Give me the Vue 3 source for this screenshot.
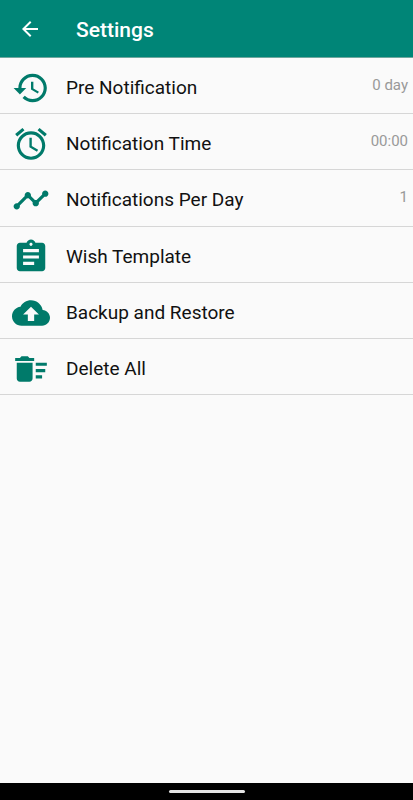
<script setup>
const items = [
  {
    label: 'Pre Notification',
    value: '0 day',
    icon: 'M13 3c-4.97 0-9 4.03-9 9H1l3.89 3.89.07.14L9 12H6c0-3.87 3.13-7 7-7s7 3.13 7 7-3.13 7-7 7c-1.93 0-3.68-.79-4.94-2.06l-1.42 1.42C8.27 19.99 10.51 21 13 21c4.97 0 9-4.03 9-9s-4.03-9-9-9zm-1 5v5l4.28 2.54.72-1.21-3.5-2.08V8H12z'
  },
  {
    label: 'Notification Time',
    value: '00:00',
    icon: 'M22 5.72l-4.6-3.86-1.29 1.53 4.6 3.86L22 5.72zM7.88 3.39L6.6 1.86 2 5.71l1.29 1.53 4.59-3.85zM12.5 8H11v6l4.75 2.85.75-1.23-4-2.37V8zM12 4c-4.97 0-9 4.03-9 9s4.02 9 9 9c4.97 0 9-4.03 9-9s-4.03-9-9-9zm0 16c-3.87 0-7-3.13-7-7s3.13-7 7-7 7 3.13 7 7-3.13 7-7 7z'
  },
  {
    label: 'Notifications Per Day',
    value: '1',
    icon: 'M23 8c0 1.1-.9 2-2 2-.18 0-.35-.02-.51-.07l-3.56 3.55c.05.16.07.34.07.52 0 1.1-.9 2-2 2s-2-.9-2-2c0-.18.02-.36.07-.52l-2.55-2.55c-.16.05-.34.07-.52.07s-.36-.02-.52-.07l-4.55 4.56c.05.16.07.33.07.51 0 1.1-.9 2-2 2s-2-.9-2-2 .9-2 2-2c.18 0 .35.02.51.07l4.56-4.55C8.02 9.36 8 9.18 8 9c0-1.1.9-2 2-2s2 .9 2 2c0 .18-.02.36-.07.52l2.55 2.55c.16-.05.34-.07.52-.07s.36.02.52.07l3.55-3.56C19.02 8.35 19 8.18 19 8c0-1.1.9-2 2-2s2 .9 2 2z'
  },
  {
    label: 'Wish Template',
    icon: 'M19 3h-4.18C14.4 1.84 13.3 1 12 1c-1.3 0-2.4.84-2.82 2H5c-1.1 0-2 .9-2 2v14c0 1.1.9 2 2 2h14c1.1 0 2-.9 2-2V5c0-1.1-.9-2-2-2zm-7 0c.55 0 1 .45 1 1s-.45 1-1 1-1-.45-1-1 .45-1 1-1zm2 14H7v-2h7v2zm3-4H7v-2h10v2zm0-4H7V7h10v2z'
  },
  {
    label: 'Backup and Restore',
    icon: 'M19.35 10.04C18.67 6.59 15.64 4 12 4 9.11 4 6.6 5.64 5.35 8.04 2.34 8.36 0 10.91 0 14c0 3.31 2.69 6 6 6h13c2.76 0 5-2.24 5-5 0-2.64-2.05-4.78-4.65-4.96zM14 13v4h-4v-4H7l5-5 5 5h-3z'
  },
  {
    label: 'Delete All',
    icon: 'M15 16h4v2h-4zm0-8h7v2h-7zm0 4h6v2h-6zM3 18c0 1.1.9 2 2 2h6c1.1 0 2-.9 2-2V8H3v10zM14 5h-3l-1-1H6L5 5H2v2h12z'
  }
]
</script>

<template>
  <div class="screen">
    <header class="bar">
      <button class="back" type="button" aria-label="Back">
        <svg viewBox="0 0 24 24" aria-hidden="true">
          <path d="M20 11H7.83l5.59-5.59L12 4l-8 8 8 8 1.41-1.41L7.83 13H20v-2z" />
        </svg>
      </button>
      <h1 class="title">Settings</h1>
    </header>
    <main class="content">
      <ul class="list">
        <li v-for="item in items" :key="item.label" class="item">
          <button class="row" type="button">
            <svg class="icon" viewBox="0 0 24 24" aria-hidden="true">
              <path :d="item.icon" />
            </svg>
            <span class="label">{{ item.label }}</span>
            <span v-if="item.value" class="value">{{ item.value }}</span>
          </button>
        </li>
      </ul>
    </main>
    <footer class="nav"><span class="handle"></span></footer>
  </div>
</template>

<style>
body {
  margin: 0;
  background: #fafafa;
}
</style>

<style scoped>
.screen {
  display: flex;
  flex-direction: column;
  min-height: 100vh;
  background: #fafafa;
  font-family: Roboto, "Liberation Sans", sans-serif;
}

button {
  margin: 0;
  padding: 0;
  border: 0;
  background: none;
  color: inherit;
  font: inherit;
  text-align: left;
  cursor: pointer;
}

.bar {
  display: flex;
  align-items: center;
  gap: 34px;
  height: 57px;
  padding-left: 18px;
  border-bottom: 1px solid #6fa79e;
  background: #008577;
  color: #fff;
}

.back {
  display: flex;
}

.back svg {
  width: 24px;
  height: 24px;
  fill: currentColor;
}

.title {
  margin: 0;
  padding-top: 2px;
  font-size: 21px;
  font-weight: 500;
  line-height: 24px;
}

.content {
  flex: 1;
}

.list {
  display: grid;
  grid-auto-rows: 1fr;
  min-height: 337px;
  margin: 0;
  padding: 0;
  list-style: none;
}

.item {
  display: flex;
  border-bottom: 1px solid #d6d6d6;
}

.row {
  display: flex;
  flex: 1;
  align-items: center;
  padding: 5px 5px 0 12px;
}

.icon {
  width: 38px;
  height: 38px;
  fill: #007a6a;
}

.label {
  flex: 1;
  margin-left: 16px;
  color: #111;
  font-size: 19px;
  line-height: 24px;
}

.value {
  align-self: flex-start;
  padding-top: 12px;
  color: #999;
  font-size: 15px;
  line-height: 20px;
}

.nav {
  display: flex;
  align-items: center;
  justify-content: center;
  height: 17px;
  background: #000;
}

.handle {
  width: 76px;
  height: 3px;
  border-radius: 2px;
  background: #e4e4e4;
}
</style>
